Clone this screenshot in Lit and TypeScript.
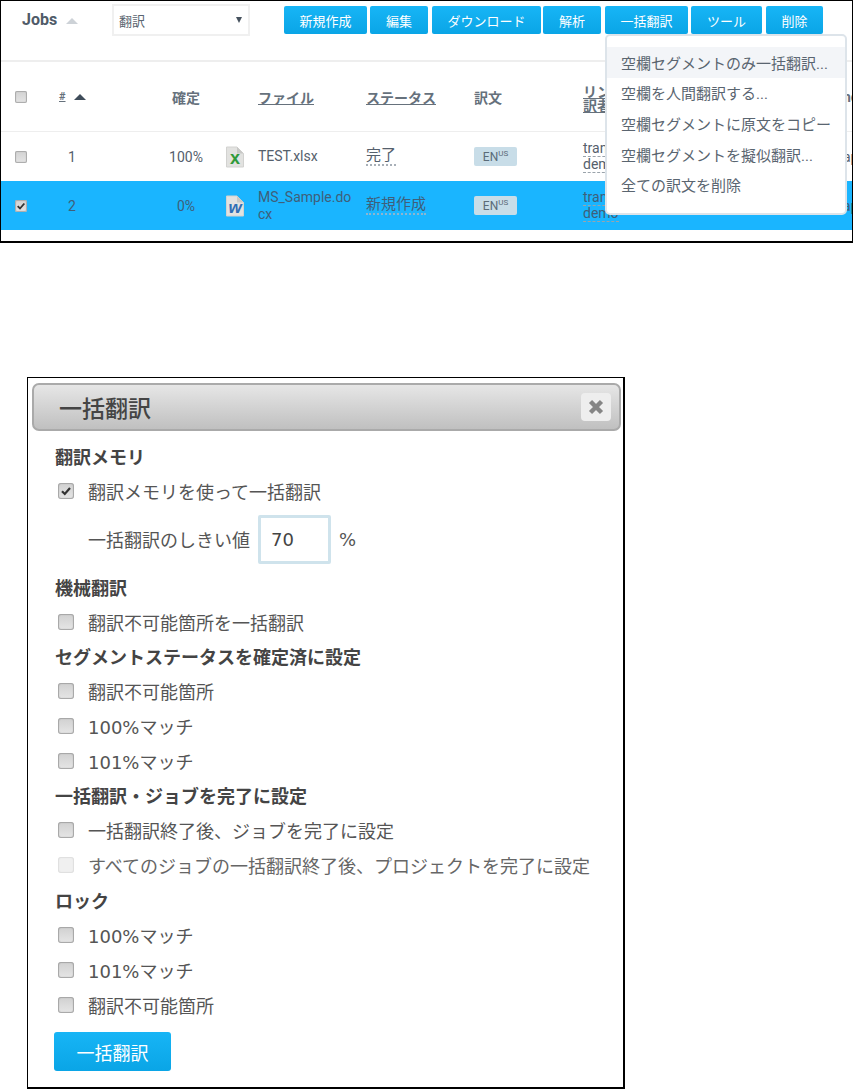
import { LitElement, html, css } from "lit";
import { customElement } from "lit/decorators.js";

@customElement("app-root")
export class AppRoot extends LitElement {
  static styles = css`
    :host { display: block; width: 853px; height: 1090px; background: #fff; font-family: Roboto, "Noto Sans CJK JP", sans-serif; overflow: hidden; }
    * { box-sizing: border-box; }
    .frame { position: relative; height: 243px; border: 1px solid #000; border-bottom-width: 2px; overflow: hidden; background: #fff; color: #55606c; }
    .toolbar { height: 59px; display: flex; align-items: flex-start; }
    .jobs { margin: 8px 0 0 21px; width: 90px; display: flex; align-items: center; gap: 9px; font-size: 16px; font-weight: 700; color: #4f5b68; height: 20px; }
    .tri-up { width: 0; height: 0; border-left: 6px solid transparent; border-right: 6px solid transparent; border-bottom: 6px solid #cdd2d7; margin-top: 3px; }
    .select { margin-top: 3px; width: 138px; height: 32px; border: 2px solid #f0f0f0; display: flex; align-items: center; justify-content: space-between; padding: 0 6px 0 5px; font-size: 13px; color: #5a6570; }
    .caret { width: 0; height: 0; border-left: 3.5px solid transparent; border-right: 3.5px solid transparent; border-top: 6px solid #46525e; }
    .btns { display: flex; margin: 5px 0 0 34px; }
    .btn { height: 28px; display: flex; align-items: center; justify-content: center; background: linear-gradient(#17b5f6, #0aa5e6); border-radius: 2px; color: #fff; font-size: 13px; border: 0; }
    .sep { height: 2px; background: #eee; }
    .row { display: grid; grid-template-columns: 49px 44px 64px 56px 44px 108px 108px 109px 260px 1fr; align-items: center; font-size: 14px; }
    .head { height: 70px; border-bottom: 1px solid #eee; font-weight: 700; font-size: 14px; color: #66717c; }
    .body { height: 49px; }
    .sel { background: #1ab5ff; color: #3f5f7a; }
    .cell-c { text-align: center; font-size: 14px; }
    .cb-cell { padding-left: 14px; display: flex; }
    .cbx { width: 12px; height: 12px; border-radius: 2px; background: linear-gradient(#d2d2d2, #e4e4e4); box-shadow: inset 0 0 1px 1px #a8a8a8; display: flex; align-items: center; justify-content: center; }
    .cbx svg { display: block; }
    .sort { display: flex; align-items: center; gap: 8px; margin-left: 9px; font-size: 11px; text-decoration: underline; }
    .tri-dark { width: 0; height: 0; border-left: 6px solid transparent; border-right: 6px solid transparent; border-bottom: 6px solid #3f4c5a; }
    .u { text-decoration: underline; }
    .file { font-size: 14px; line-height: 17px; width: 97px; word-break: break-all; }
    .status-wrap { margin-bottom: 3px; }
    .status { font-size: 15px; line-height: 17px; border-bottom: 2px dotted #a8b0b8; justify-self: start; }
    .sel .status { border-bottom-color: #8fb5cf; }
    .badge { justify-self: start; width: 43px; height: 19px; border-radius: 2px; background: #c8dde8; display: flex; justify-content: center; align-items: center; font-size: 12px; color: #5a6b78; }
    .badge sup { font-size: 8px; line-height: 8px; margin-top: -5px; }
    .two { font-size: 14px; line-height: 17px; }
    .two span { display: block; width: max-content; border-bottom: 1px dashed #9aa3ab; line-height: 15px; }
    .two-h { font-size: 14px; line-height: 14px; font-weight: 700; text-decoration: underline; margin-top: 4px; }
    .cut { font-size: 14px; white-space: nowrap; }
    .menu { position: absolute; left: 604px; top: 33px; width: 242px; height: 181px; background: #fff; border: 2px solid #dde4ea; border-radius: 5px; padding-top: 11px; font-size: 15px; color: #5a6570; }
    .mi { height: 30.6px; display: flex; align-items: center; padding-left: 14px; white-space: nowrap; }
    .mi.on { background: #f3f5f8; }

    .dlg { margin: 134px 0 0 27px; width: 598px; height: 712px; border: 1px solid #000; border-right-width: 2px; border-bottom-width: 2px; padding: 5px 3px 0 4px; color: #555; font-family: "DejaVu Sans", "Noto Sans CJK JP", sans-serif; }
    .title { height: 48px; width: 589px; border: 2px solid #aaa; border-radius: 7px; background: linear-gradient(#e6e6e6, #c0c0c0); display: flex; align-items: center; justify-content: space-between; padding: 0 8px 0 25px; font-size: 23px; font-weight: 500; color: #444; }
    .close { width: 30px; height: 28px; background: #eee; border-radius: 4px; display: flex; align-items: center; justify-content: center; }
    .content { padding: 8px 0 0 23px; }
    .h { height: 34px; display: flex; align-items: center; font-size: 18px; font-weight: 700; color: #444; white-space: nowrap; }
    .h.lock { height: 35px; }
    .c { height: 35px; display: flex; align-items: center; padding-left: 3px; font-size: 18px; color: #555; white-space: nowrap; }
    .c .box { width: 16px; height: 16px; margin-right: 14px; flex: none; border-radius: 3px; background: linear-gradient(#d0d0d0, #e6e6e6); box-shadow: inset 0 0 1px 1px #a4a4a4; display: flex; align-items: center; justify-content: center; }
    .c.off { color: #666; }
    .c.off .box { background: #f0f0f0; box-shadow: inset 0 0 1px 1px #dedede; }
    .th { height: 62px; display: flex; align-items: center; padding-left: 33px; font-size: 18px; white-space: nowrap; }
    .inp { width: 73px; height: 49px; margin: 0 8px 0 8px; border: 3px solid #cfe3ec; border-radius: 2px; display: flex; align-items: center; padding-left: 10px; font-size: 18px; color: #444; }
    .pct { font-size: 18px; }
    .go { margin: 10px 0 0 -1px; width: 117px; height: 39px; background: linear-gradient(#17b5f6, #0aa5e6); color: #fff; border-radius: 3px; border: 0; display: flex; align-items: center; justify-content: center; font-size: 18px; }
  `;

  private check(size: number) {
    return html`<svg width=${size} height=${size} viewBox="0 0 12 12"><path d="M2 6.2 L4.8 9 L10 3" fill="none" stroke="#333" stroke-width="2.2"/></svg>`;
  }

  private doc(letter: string, color: string) {
    return html`<svg width="18" height="22" viewBox="0 0 18 22">
      <path d="M0.5 1 H11 L17.5 7.5 V21 H0.5 Z" fill="#e2e2e0" stroke="#d2d2d0"/>
      <path d="M11 1 V7.5 H17.5 Z" fill="#c8c8c6"/>
      <text x="9" y="18" text-anchor="middle" font-family="Liberation Sans, sans-serif" font-weight="700" font-style=${letter === "w" ? "italic" : "normal"} font-size=${letter === "w" ? 17 : 18} fill=${color}>${letter}</text>
    </svg>`;
  }

  private row(n: string, pct: string, icon: unknown, file: string, status: string, sel: boolean) {
    return html`<div class="row body ${sel ? "sel" : ""}">
      <div class="cb-cell"><span class="cbx">${sel ? this.check(10) : ""}</span></div>
      <div class="cell-c">${n}</div>
      <div></div>
      <div class="cell-c">${pct}</div>
      <div style="padding-left:12px;display:flex">${icon}</div>
      <div class="file">${file}</div>
      <div class="status-wrap"><span class="status">${status}</span></div>
      <div class="badge">EN<sup>US</sup></div>
      <div class="two"><span>trans</span><span>demo</span></div>
      <div class="cut">ap</div>
    </div>`;
  }

  private cb(label: string, mode: "" | "on" | "off" = "") {
    return html`<div class="c ${mode === "off" ? "off" : ""}">
      <span class="box">${mode === "on" ? this.check(12) : ""}</span>${label}
    </div>`;
  }

  render() {
    const btns: [string, number, number][] = [
      ["新規作成", 83, 3], ["編集", 58, 4], ["ダウンロード", 109, 2], ["解析", 58, 4],
      ["一括翻訳", 83, 3], ["ツール", 71, 4], ["削除", 57, 0],
    ];
    return html`
      <div class="frame">
        <div class="toolbar">
          <div class="jobs">Jobs<span class="tri-up"></span></div>
          <div class="select">翻訳<span class="caret"></span></div>
          <div class="btns">
            ${btns.map(([t, w, g]) => html`<div class="btn" style="width:${w}px;margin-right:${g}px">${t}</div>`)}
          </div>
        </div>
        <div class="sep"></div>
        <div class="row head">
          <div class="cb-cell"><span class="cbx"></span></div>
          <div class="sort" style="font-weight:700"><span>#</span><span class="tri-dark"></span></div>
          <div></div>
          <div class="cell-c" style="font-weight:700">確定</div>
          <div></div>
          <div class="u">ファイル</div>
          <div class="u">ステータス</div>
          <div>訳文</div>
          <div class="two-h">リンギスト<br />訳者</div>
          <div class="cut">ne</div>
        </div>
        ${this.row("1", "100%", this.doc("x", "#2f9a3a"), "TEST.xlsx", "完了", false)}
        ${this.row("2", "0%", this.doc("w", "#2f6db5"), "MS_Sample.docx", "新規作成", true)}
        <div class="menu">
          <div class="mi on">空欄セグメントのみ一括翻訳...</div>
          <div class="mi">空欄を人間翻訳する...</div>
          <div class="mi">空欄セグメントに原文をコピー</div>
          <div class="mi">空欄セグメントを擬似翻訳...</div>
          <div class="mi">全ての訳文を削除</div>
        </div>
      </div>

      <div class="dlg">
        <div class="title">一括翻訳
          <span class="close"><svg width="16" height="16" viewBox="0 0 16 16"><path d="M2.5 2.5 L13.5 13.5 M13.5 2.5 L2.5 13.5" stroke="#858585" stroke-width="4.4"/></svg></span>
        </div>
        <div class="content">
          <div class="h">翻訳メモリ</div>
          ${this.cb("翻訳メモリを使って一括翻訳", "on")}
          <div class="th">一括翻訳のしきい値<span class="inp">70</span><span class="pct">%</span></div>
          <div class="h">機械翻訳</div>
          ${this.cb("翻訳不可能箇所を一括翻訳")}
          <div class="h">セグメントステータスを確定済に設定</div>
          ${this.cb("翻訳不可能箇所")}
          ${this.cb("100%マッチ")}
          ${this.cb("101%マッチ")}
          <div class="h">一括翻訳・ジョブを完了に設定</div>
          ${this.cb("一括翻訳終了後、ジョブを完了に設定")}
          ${this.cb("すべてのジョブの一括翻訳終了後、プロジェクトを完了に設定", "off")}
          <div class="h lock">ロック</div>
          ${this.cb("100%マッチ")}
          ${this.cb("101%マッチ")}
          ${this.cb("翻訳不可能箇所")}
          <div class="go">一括翻訳</div>
        </div>
      </div>
    `;
  }
}
